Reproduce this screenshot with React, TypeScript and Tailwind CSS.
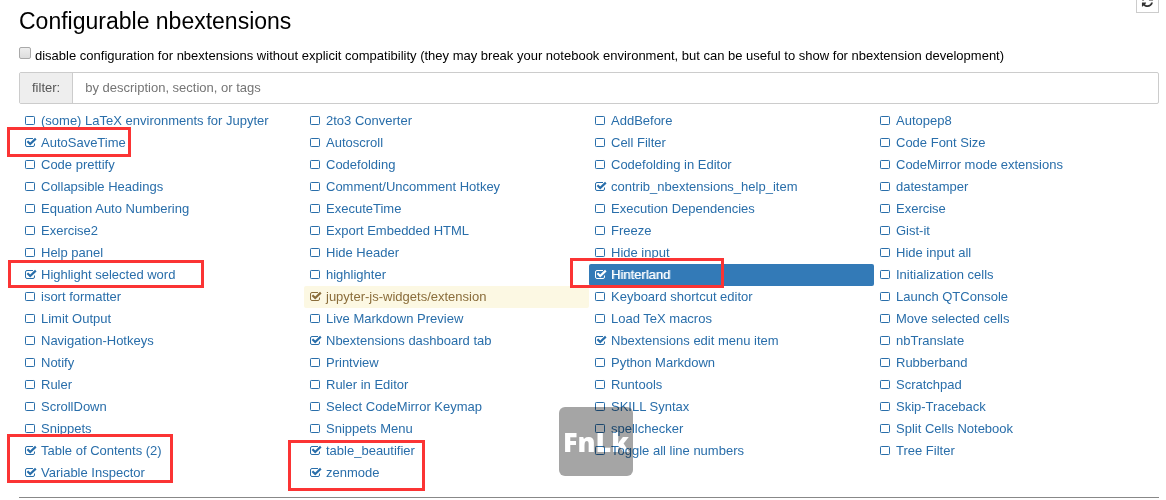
import { useState } from "react";

type Extension = { name: string; enabled?: boolean; tone?: "selected" | "warning" };

const on = (name: string, tone?: Extension["tone"]): Extension => ({ name, enabled: true, tone });
const off = (name: string): Extension => ({ name });

const columns: Extension[][] = [
  [
    off("(some) LaTeX environments for Jupyter"),
    on("AutoSaveTime"),
    off("Code prettify"),
    off("Collapsible Headings"),
    off("Equation Auto Numbering"),
    off("Exercise2"),
    off("Help panel"),
    on("Highlight selected word"),
    off("isort formatter"),
    off("Limit Output"),
    off("Navigation-Hotkeys"),
    off("Notify"),
    off("Ruler"),
    off("ScrollDown"),
    off("Snippets"),
    on("Table of Contents (2)"),
    on("Variable Inspector"),
  ],
  [
    off("2to3 Converter"),
    off("Autoscroll"),
    off("Codefolding"),
    off("Comment/Uncomment Hotkey"),
    off("ExecuteTime"),
    off("Export Embedded HTML"),
    off("Hide Header"),
    off("highlighter"),
    on("jupyter-js-widgets/extension", "warning"),
    off("Live Markdown Preview"),
    on("Nbextensions dashboard tab"),
    off("Printview"),
    off("Ruler in Editor"),
    off("Select CodeMirror Keymap"),
    off("Snippets Menu"),
    on("table_beautifier"),
    on("zenmode"),
  ],
  [
    off("AddBefore"),
    off("Cell Filter"),
    off("Codefolding in Editor"),
    on("contrib_nbextensions_help_item"),
    off("Execution Dependencies"),
    off("Freeze"),
    off("Hide input"),
    on("Hinterland", "selected"),
    off("Keyboard shortcut editor"),
    off("Load TeX macros"),
    on("Nbextensions edit menu item"),
    off("Python Markdown"),
    off("Runtools"),
    off("SKILL Syntax"),
    off("spellchecker"),
    off("Toggle all line numbers"),
  ],
  [
    off("Autopep8"),
    off("Code Font Size"),
    off("CodeMirror mode extensions"),
    off("datestamper"),
    off("Exercise"),
    off("Gist-it"),
    off("Hide input all"),
    off("Initialization cells"),
    off("Launch QTConsole"),
    off("Move selected cells"),
    off("nbTranslate"),
    off("Rubberband"),
    off("Scratchpad"),
    off("Skip-Traceback"),
    off("Split Cells Notebook"),
    off("Tree Filter"),
  ],
];

const REFRESH =
  "M1639 1056q0 5-1 7-64 268-268 434.5t-478 166.5q-146 0-282.5-55t-243.5-157l-129 129q-19 19-45 19t-45-19-19-45v-448q0-26 19-45t45-19h448q26 0 45 19t19 45-19 45l-137 137q71 66 161 102t187 36q134 0 250-65t186-179q11-17 53-117 8-23 30-23h192q13 0 22.5 9.5t9.5 22.5zm25-800v448q0 26-19 45t-45 19h-448q-26 0-45-19t-19-45 19-45l138-138q-148-137-349-137-134 0-250 65t-186 179q-11 17-53 117-8 23-30 23h-199q-13 0-22.5-9.5t-9.5-22.5v-7q65-268 270-434.5t480-166.5q146 0 284 55.5t245 156.5l130-129q19-19 45-19t45 19 19 45z";

function CheckIcon({ checked }: { checked: boolean }) {
  return (
    <svg viewBox="0 0 13 13" className="size-[13px] fill-none stroke-current" aria-hidden="true">
      {checked ? (
        <>
          <path d="M9 2.5H3Q1.5 2.5 1.5 4v5q0 1.5 1.5 1.5h6q1.5 0 1.5-1.5V7.5" />
          <path d="M3.4 5.2l2.8 2.8 5.6-5.4" strokeWidth="2.2" />
        </>
      ) : (
        <rect x="1.5" y="2.5" width="9" height="8" rx=".8" />
      )}
    </svg>
  );
}

function ExtensionRow({ extension }: { extension: Extension }) {
  const [enabled, setEnabled] = useState(Boolean(extension.enabled));
  const tone =
    extension.tone === "selected"
      ? "bg-[#337ab7] text-white text-shadow-[1px_0_0_#ffffff80]"
      : extension.tone === "warning"
        ? "bg-[#fcf8e3] text-[#8a6d3b]"
        : "text-[#296eaa]";
  return (
    <li className={`relative flex h-[22px] items-center gap-1 rounded-xs pl-[5px] ${tone}`}>
      <label className="flex pb-px">
        <input
          type="checkbox"
          className="sr-only"
          aria-label={extension.name}
          checked={enabled}
          onChange={(e) => setEnabled(e.target.checked)}
        />
        <CheckIcon checked={enabled} />
      </label>
      <a href="#" className="whitespace-nowrap">
        {extension.name}
      </a>
    </li>
  );
}

const markers = [
  "left-[7px] top-[127px] w-[124px] h-[30px]",
  "left-[8px] top-[260px] w-[196px] h-[28px]",
  "left-[570px] top-[258px] w-[154px] h-[30px]",
  "left-[7px] top-[434px] w-[166px] h-[49px]",
  "left-[288px] top-[440px] w-[137px] h-[51px]",
];

export default function App() {
  return (
    <main className="relative overflow-hidden bg-white pr-[7px] pl-[19px] font-['Liberation_Sans',Arial,sans-serif] text-[13px] leading-5 text-black">
      <header className="flex h-[42px] items-start justify-between">
        <h1 className="pt-[5px] text-[23px] leading-8">Configurable nbextensions</h1>
        <button
          type="button"
          aria-label="Refresh"
          className="-mt-2 flex h-[21px] w-[23px] items-center justify-center border border-[#ccc] pb-0.5 text-[#333]"
        >
          <svg viewBox="0 0 1792 1792" className="size-[13px] fill-current" aria-hidden="true">
            <path d={REFRESH} />
          </svg>
        </button>
      </header>

      <label className="flex h-[30px] items-start gap-1 pt-1">
        <input
          type="checkbox"
          className="mt-px size-3 shrink-0 appearance-none rounded-xs border border-[#a9a9a9] bg-linear-to-b from-[#eee] to-[#ddd] checked:bg-[#337ab7]"
        />
        <span>
          disable configuration for nbextensions without explicit compatibility (they may break your notebook
          environment, but can be useful to show for nbextension development)
        </span>
      </label>

      <div className="flex h-8 overflow-hidden rounded-xs border border-[#ccc]">
        <label htmlFor="filter" className="flex items-center border-r border-[#ccc] bg-[#eee] px-3 text-[#555]">
          filter:
        </label>
        <input
          id="filter"
          type="text"
          placeholder="by description, section, or tags"
          className="min-w-0 flex-1 px-3 text-[#555] outline-none placeholder:text-[#757575]"
        />
      </div>

      <nav aria-label="Extensions" className="mt-[6px] grid grid-cols-4">
        {columns.map((column, i) => (
          <ul key={i}>
            {column.map((extension) => (
              <ExtensionRow key={extension.name} extension={extension} />
            ))}
          </ul>
        ))}
      </nav>
      <hr className="mt-[13px] border-[#888]" />

      {markers.map((place) => (
        <div key={place} className={`pointer-events-none absolute border-3 border-[#fb3434] ${place}`} />
      ))}
      <div className="pointer-events-none absolute top-[407px] left-[559px] flex h-[69px] w-[74px] items-center justify-center rounded-md bg-[#a5a5a5] font-['Open_Sans',sans-serif] text-[27px] font-extrabold text-white mix-blend-multiply">
        FnLk
      </div>
    </main>
  );
}
